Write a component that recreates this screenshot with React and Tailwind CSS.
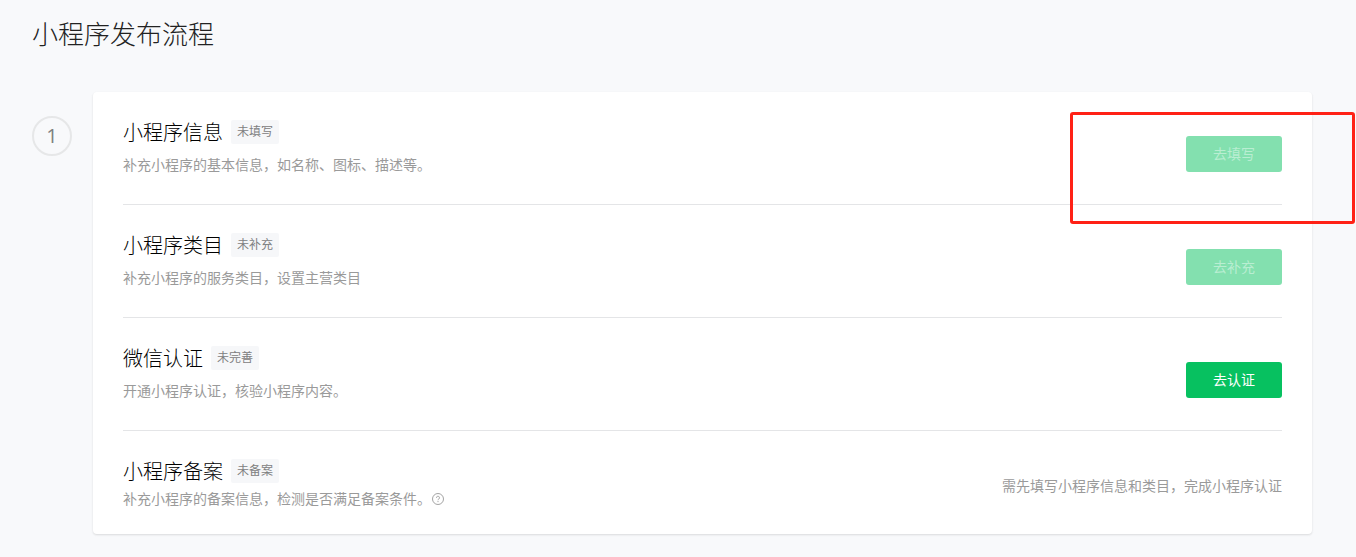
import React from 'react';

const steps = [
  { title: '小程序信息', status: '未填写', desc: '补充小程序的基本信息，如名称、图标、描述等。', action: '去填写', disabled: true, highlighted: true },
  { title: '小程序类目', status: '未补充', desc: '补充小程序的服务类目，设置主营类目', action: '去补充', disabled: true },
  { title: '微信认证', status: '未完善', desc: '开通小程序认证，核验小程序内容。', action: '去认证' },
];

function HelpIcon() {
  return (
    <svg viewBox="0 0 12 12" fill="none" stroke="currentColor" className="w-3 h-3 shrink-0" aria-hidden="true">
      <circle cx="6" cy="6" r="5.5" strokeWidth="0.9" />
      <path d="M4.5 4.8a1.5 1.5 0 1 1 2.3 1.2c-.5.35-.8.6-.8 1.2" strokeWidth="0.9" />
      <circle cx="6" cy="8.6" r="0.55" fill="currentColor" stroke="none" />
    </svg>
  );
}

function StepTitle({ title, status }) {
  return (
    <div className="flex items-start gap-2 h-6">
      <h2 className="text-xl leading-[26px] font-light text-black">{title}</h2>
      <span className="px-1.5 text-xs leading-6 text-[#7e8081] bg-[#f6f7f9] rounded-xs">{status}</span>
    </div>
  );
}

function StepRow({ step }) {
  return (
    <li className="relative flex items-center justify-between gap-6 pt-7 pb-4 border-b border-[#e4e5e7]">
      <div className="min-w-0 pb-[13px]">
        <StepTitle title={step.title} status={step.status} />
        <p className="mt-[11px] text-sm leading-5 text-[#9a9a9a]">{step.desc}</p>
      </div>
      <button
        type="button"
        disabled={step.disabled}
        className="w-24 h-9 shrink-0 rounded-[3px] bg-[#07c160] text-sm text-white disabled:bg-[#83e0af] disabled:text-[#b9eed2]"
      >
        {step.action}
      </button>
      {step.highlighted && (
        <div className="absolute top-5 -right-[73px] w-[285px] h-[112px] border-3 border-[#ff2116] rounded-[3px] pointer-events-none" />
      )}
    </li>
  );
}

export default function App() {
  return (
    <div className="min-h-screen bg-[#f8f9fb] pl-8 pr-11 pt-4 pb-5 font-['Open_Sans','Noto_Sans_CJK_SC',sans-serif]">
      <h1 className="text-[26px] leading-9 font-light text-[#222]">小程序发布流程</h1>

      <div className="flex items-start gap-[21px] mt-10">
        <div className="flex items-center justify-center w-10 h-10 mt-6 shrink-0 rounded-full border-2 border-[#e6e7e8] text-xl text-[#7e8081]">
          1
        </div>

        <ul className="flex-1 min-w-0 px-[30px] bg-white rounded-[4px] shadow-[0_1px_2px_rgba(150,150,150,0.3)]">
          {steps.map((step) => (
            <StepRow key={step.title} step={step} />
          ))}

          <li className="flex items-center justify-between gap-6 pt-7 pb-[21px]">
            <div className="min-w-0 pb-1">
              <StepTitle title="小程序备案" status="未备案" />
              <p className="flex items-center gap-px mt-1.5 text-sm leading-5 text-[#9a9a9a]">
                补充小程序的备案信息，检测是否满足备案条件。
                <HelpIcon />
              </p>
            </div>
            <p className="text-sm leading-5 text-[#9a9a9a]">需先填写小程序信息和类目，完成小程序认证</p>
          </li>
        </ul>
      </div>
    </div>
  );
}
